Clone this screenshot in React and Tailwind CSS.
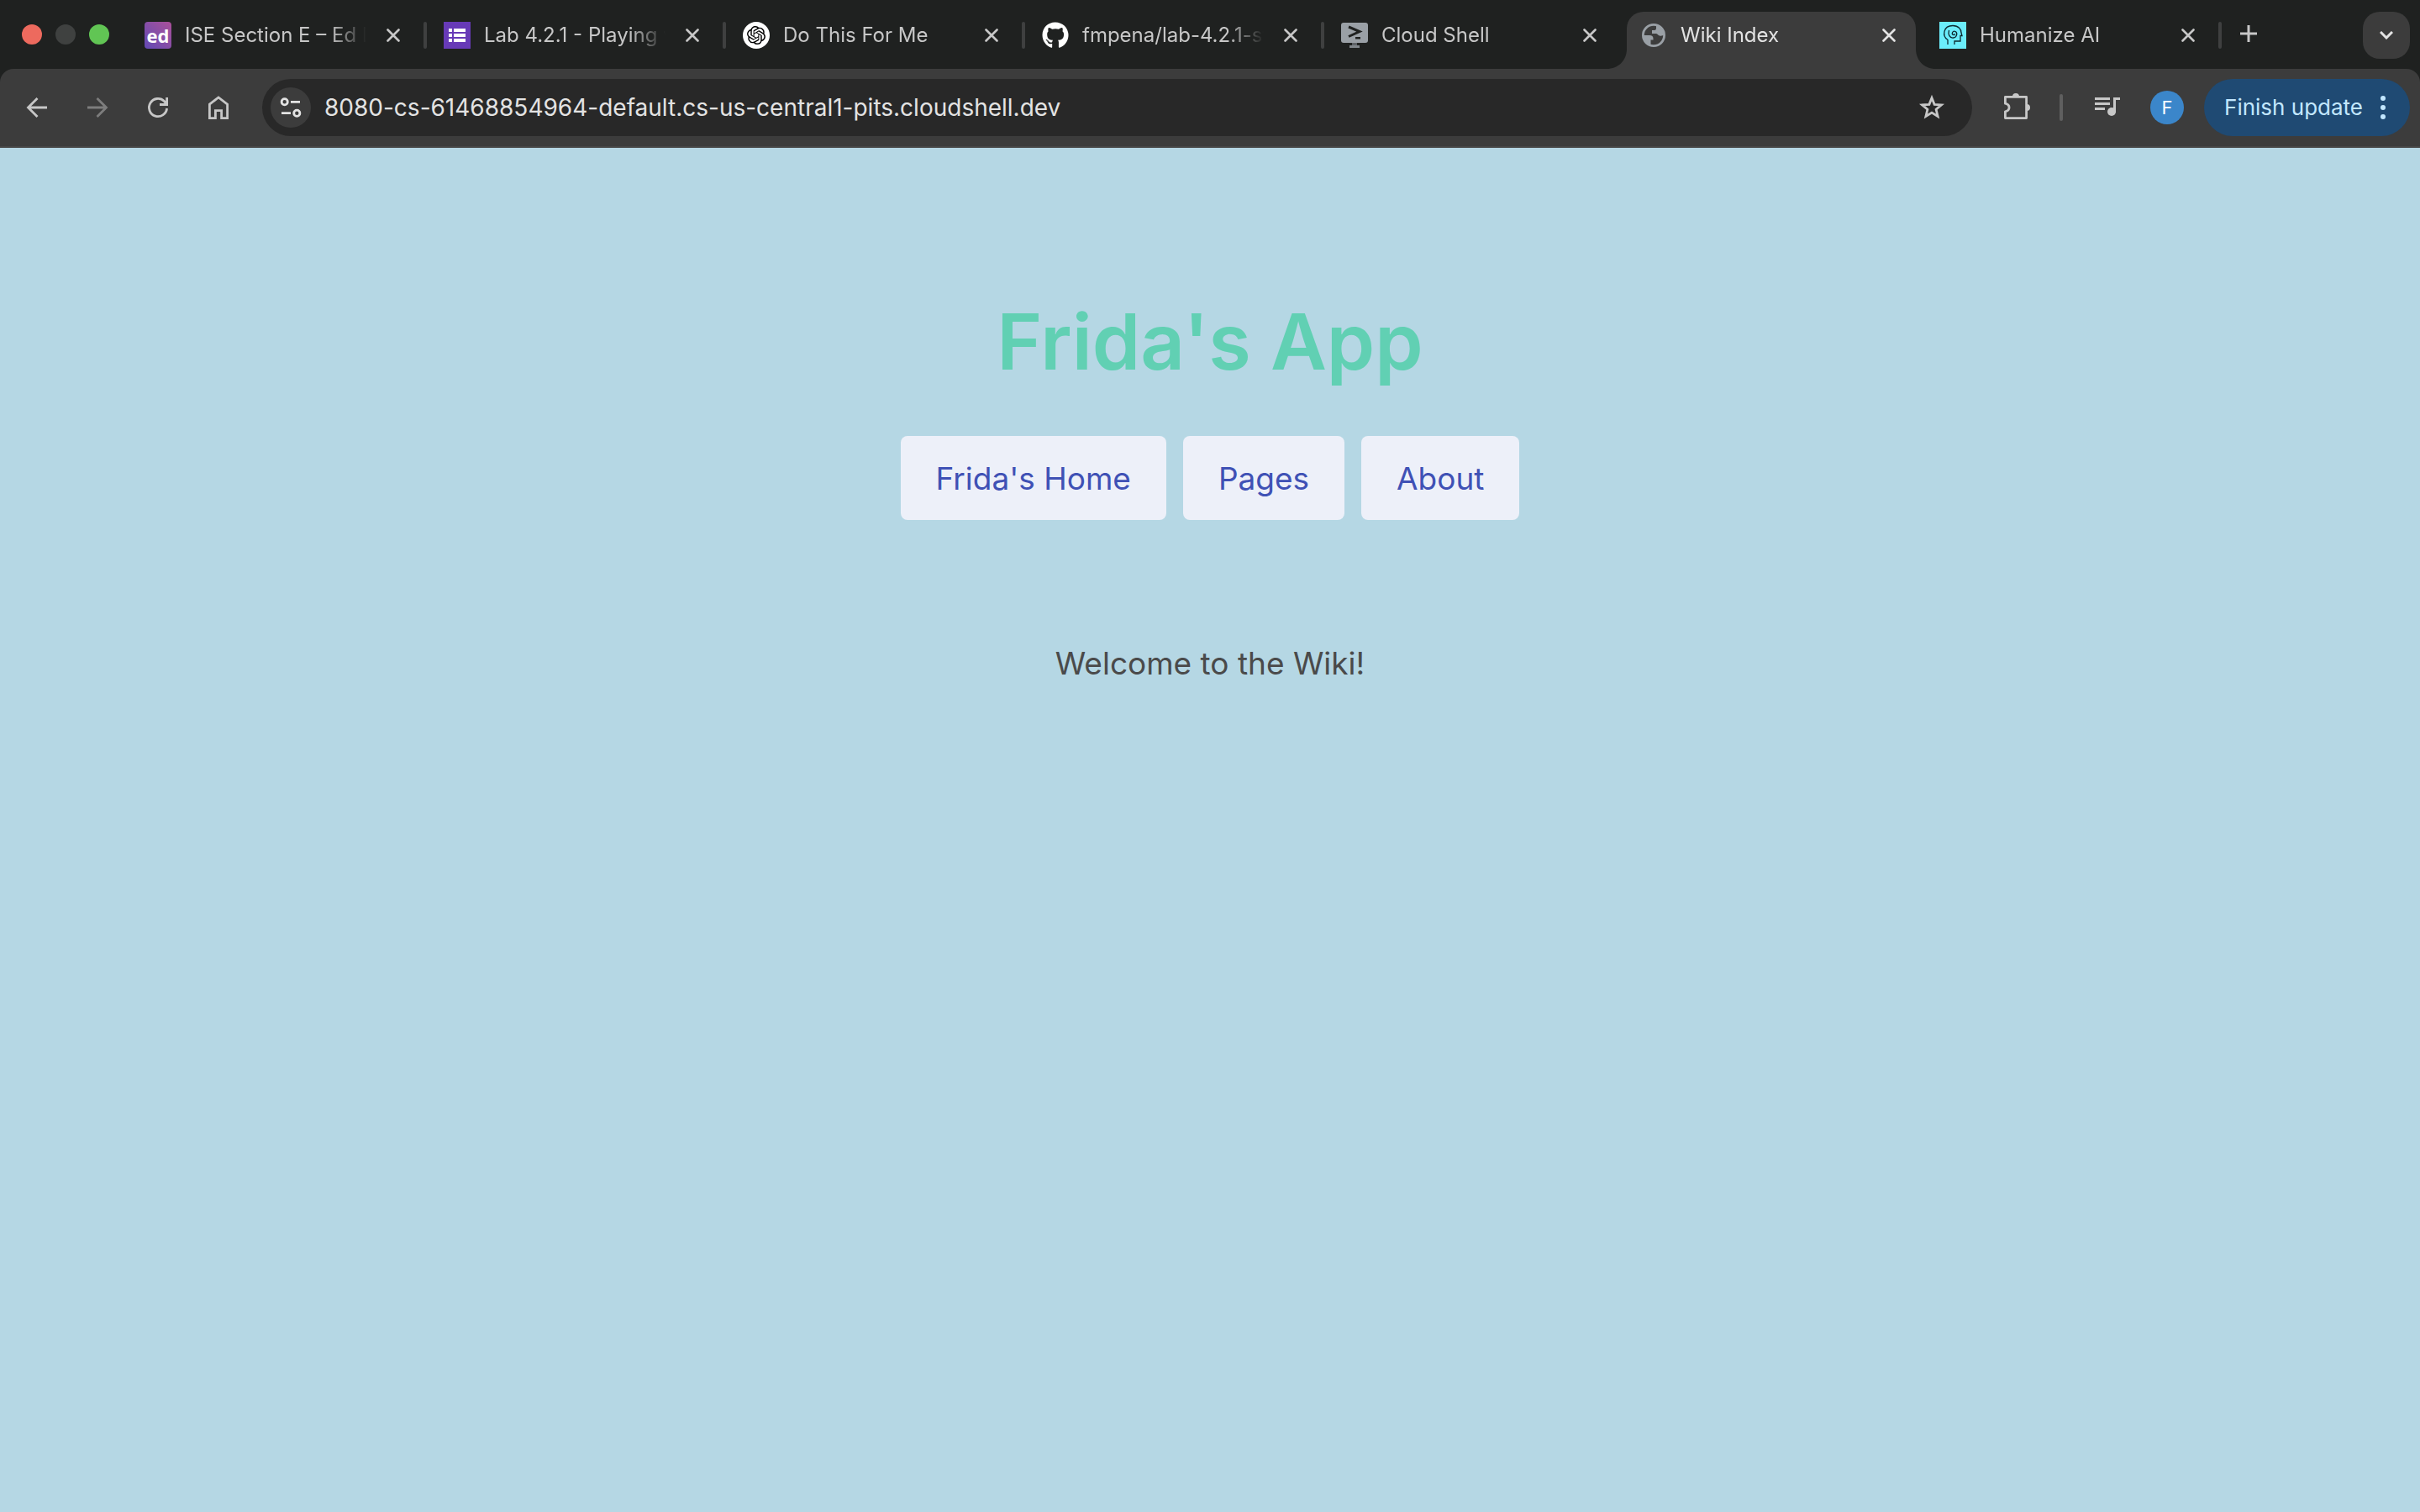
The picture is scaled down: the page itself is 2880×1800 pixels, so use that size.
import React from "react";
import { FaGithub } from "react-icons/fa";
import { SiOpenai } from "react-icons/si";

function EdIcon() {
  return (
    <span className="flex h-8 w-8 items-center justify-center rounded-sm bg-linear-to-tr from-[#6148b4] to-[#ab4f99] font-['Open_Sans',sans-serif] text-[22px] leading-6 font-bold text-white">
      ed
    </span>
  );
}

function FormsIcon() {
  return (
    <svg viewBox="0 0 32 32" className="h-8 w-8">
      <path fill="#673ab7" d="M0 0h32v32H0z" />
      <path fill="#fff" d="M6 8h4v4H6zM12 8h14v4H12zM6 14h4v4H6zM12 14h14v4H12zM6 20h4v4H6zM12 20h14v4H12z" />
    </svg>
  );
}

function GptIcon() {
  return (
    <span className="flex h-8 w-8 items-center justify-center rounded-full bg-white text-black">
      <SiOpenai size={22} />
    </span>
  );
}

function GithubIcon() {
  return <FaGithub size={32} className="text-white" />;
}

function ShellIcon() {
  return (
    <svg viewBox="0 0 32 32" className="h-8 w-8">
      <rect y="1" width="32" height="24" rx="3" fill="#9aa0a6" />
      <path fill="#5f6368" d="M13 25h6v3h-6z" />
      <path fill="#80868b" d="M10 28h12v3H10z" />
      <path fill="none" stroke="#1f2120" strokeWidth="3" d="M9 6l13 5.500L9 17.500" />
      <path fill="#1f2120" d="M17 18h6v2.500h-6z" />
    </svg>
  );
}

function GlobeIcon() {
  return (
    <svg viewBox="0 0 32 32" className="h-8 w-8">
      <circle cx="16" cy="16" r="12.600" fill="none" stroke="#9aa0a6" strokeWidth="2.800" />
      <path fill="#9aa0a6" d="M3 16h8c3 0 4.500 1.500 4.500 4v1.500h-3V28C7 27 3 22 3 16zM17 4c6 0 11 5 12 11-2 1.500-4 2-6 1.500-2-.500-2-2-4-2.500h-5v-4h3c1.500 0 2-1 2-2.500V4z" />
    </svg>
  );
}

function HeadIcon() {
  return (
    <svg viewBox="0 0 32 32" className="h-8 w-8" fill="none" stroke="#0c2a30" strokeWidth="1.300">
      <path fill="#6bedfb" stroke="none" d="M0 0h32v32H0z" />
      <path d="M10 27v-5.500C3 17 4.500 4.500 16 4.500c7 0 10 4.500 10 8.500l1 3.500h-2V23h-7v4" />
      <path d="M11.500 10c-1.500 5 1 9.500 5 9 4.500-.500 5.500-6 2.500-7.500-3-1.300-5 2.500-2.500 4 1.200.400 2-.300 1.800-1.300" />
    </svg>
  );
}

function Cross() {
  return (
    <svg viewBox="0 0 16 16" className="h-4 w-4" fill="none" stroke="currentColor" strokeWidth="2.600" strokeLinecap="round">
      <path d="M1.500 1.500l13 13M14.500 1.500l-13 13" />
    </svg>
  );
}

const tabs = [
  { title: "ISE Section E – Ed Discussion", Icon: EdIcon },
  { title: "Lab 4.2.1 - Playing with Flask", Icon: FormsIcon },
  { title: "Do This For Me", Icon: GptIcon },
  { title: "fmpena/lab-4.2.1-starter", Icon: GithubIcon },
  { title: "Cloud Shell", Icon: ShellIcon },
  { title: "Wiki Index", Icon: GlobeIcon, active: true },
  { title: "Humanize AI", Icon: HeadIcon },
];

function Flare({ className, d }) {
  return (
    <svg viewBox="0 0 24 24" className={className} fill="#3c3c3c">
      <path d={d} />
    </svg>
  );
}

function Tab({ title, Icon, active, divider }) {
  return (
    <div className="flex h-full w-[356px] min-w-0 items-end">
      <div
        className={
          active
            ? "relative ml-1 flex h-[68px] w-[344px] items-center rounded-t-[20px] bg-[#3c3c3c] pb-3 pl-4 text-[#e3e3e3]"
            : "flex h-[68px] w-[352px] min-w-0 items-center pb-3 pl-5 text-[#c7c7c7]"
        }
      >
        {active && <Flare className="absolute bottom-0 -left-6 h-6 w-6" d="M24 0v24H0C14 24 24 14 24 0z" />}
        <Icon />
        <button className="ml-4 w-[216px] overflow-hidden mask-r-from-80% mask-r-to-100% text-left text-[24px] leading-8 whitespace-nowrap">
          {title}
        </button>
        <button aria-label={"Close " + title} className="ml-6 flex h-8 w-4 items-center">
          <Cross />
        </button>
        {active && <Flare className="absolute -right-6 bottom-0 h-6 w-6" d="M0 0v24h24C10 24 0 14 0 0z" />}
      </div>
      {divider && <span className="mb-6 h-8 w-1 rounded-sm bg-[#3f4040]" />}
    </div>
  );
}

function Stroke({ children }) {
  return (
    <svg viewBox="0 0 32 32" className="h-8 w-8" fill="none" stroke="currentColor" strokeWidth="2.800">
      {children}
    </svg>
  );
}

function TabStrip() {
  return (
    <div className="flex h-[82px] bg-[#1f2120]">
      <div className="flex w-[152px] shrink-0 items-center gap-4 pl-[26px]">
        <button aria-label="Close window" className="h-6 w-6 rounded-full bg-[#ed6a5e]" />
        <button aria-label="Minimize window" className="h-6 w-6 rounded-full bg-[#3f4140]" />
        <button aria-label="Zoom window" className="h-6 w-6 rounded-full bg-[#61c554]" />
      </div>
      {tabs.map((tab, i) => (
        <Tab key={tab.title} {...tab} divider={!tab.active && !tabs[i + 1]?.active} />
      ))}
      <button aria-label="New tab" className="flex w-16 shrink-0 items-center justify-center pb-0.5 text-[#c7c7c7]">
        <svg viewBox="0 0 20 20" className="h-5 w-5" fill="currentColor">
          <path d="M8.500 0h3v8.500H20v3h-8.500V20h-3v-8.500H0v-3h8.500z" />
        </svg>
      </button>
      <button
        aria-label="Search tabs"
        className="mt-3.5 mr-3 ml-auto flex h-14 w-14 shrink-0 items-center justify-center rounded-[20px] bg-[#3c3c3c] text-[#e3e3e3]"
      >
        <svg viewBox="0 0 16 10" className="h-2.5 w-4" fill="none" stroke="currentColor" strokeWidth="3">
          <path d="M1 1l7 7 7-7" />
        </svg>
      </button>
    </div>
  );
}

function Toolbar() {
  return (
    <div className="bg-[#1f2120]">
      <div className="flex h-[94px] items-center rounded-t-2xl border-b-2 border-[#474747] bg-[#3c3c3c] pr-3 pl-7 text-[#c7c7c7]">
        <div className="flex gap-10">
          <button aria-label="Back">
            <Stroke>
              <path d="M28 16H6M16.500 5L5.500 16l11 11" />
            </Stroke>
          </button>
          <button aria-label="Forward" className="text-[#7d7d7d]">
            <Stroke>
              <path d="M4 16h22M15.500 5l11 11-11 11" />
            </Stroke>
          </button>
          <button aria-label="Reload">
            <Stroke>
              <path d="M26.600 17A10.600 10.600 0 1 1 23.500 8.500L26 11.500M26.600 4v8.500H18" />
            </Stroke>
          </button>
          <button aria-label="Home">
            <Stroke>
              <path d="M5.400 12.200L16 4l10.600 8.200v16.400h-7v-9h-7.200v9h-7z" />
            </Stroke>
          </button>
        </div>
        <div className="ml-9 flex h-[68px] flex-1 items-center rounded-full bg-[#282828] pr-8 pl-2.5">
          <button
            aria-label="View site information"
            className="flex h-12 w-12 items-center justify-center rounded-full bg-[#3c3c3c] text-[#e3e3e3]"
          >
            <Stroke>
              <circle cx="8.700" cy="9.300" r="3.600" />
              <circle cx="23.300" cy="22.700" r="3.600" />
              <path d="M16 9.300h11M5 22.700h11" />
            </Stroke>
          </button>
          <input
            aria-label="Address"
            readOnly
            value="8080-cs-61468854964-default.cs-us-central1-pits.cloudshell.dev"
            className="ml-4 min-w-0 flex-1 bg-transparent text-[28px] leading-9 text-[#e3e3e3] outline-none"
          />
          <button aria-label="Bookmark this tab">
            <Stroke>
              <path d="M16 4.500l3.100 7.800 8.400.600-6.400 5.400 2 8.200L16 22.100l-7.100 4.400 2-8.200-6.400-5.400 8.400-.600z" />
            </Stroke>
          </button>
        </div>
        <button aria-label="Extensions" className="ml-9">
          <svg viewBox="0 0 36 36" className="h-9 w-9" fill="none" stroke="currentColor" strokeWidth="2.800">
            <path strokeLinejoin="round" d="M3.400 5.400h25.200v25.200H3.400v-7.800c6.200-1.500 6.200-8.100 0-9.600z" />
            <path fill="currentColor" stroke="none" d="M12 5a4 4 0 0 1 8 0zM29 14a4 4 0 0 1 0 8z" />
          </svg>
        </button>
        <span className="ml-8 h-8 w-1 rounded-sm bg-[#5f5f5f]" />
        <button aria-label="Media controls" className="ml-9">
          <svg viewBox="0 0 36 32" className="h-8 w-9" fill="currentColor">
            <path d="M2 4h18v3H2zM2 10h18v3H2zM2 16h12v3H2zM24 4h8v3h-5v15h-3z" />
            <circle cx="22" cy="21" r="5" />
          </svg>
        </button>
        <button className="ml-8 flex h-10 w-10 items-center justify-center rounded-full bg-[#3b86ca] text-[22px] leading-6 text-white">
          F
        </button>
        <button className="ml-6 flex h-[68px] items-center rounded-full bg-[#1f4a73] pr-7 pl-6 text-[26px] leading-8 text-[#c2e7ff]">
          Finish update
          <svg viewBox="0 0 8 28" className="ml-5 h-7 w-2" fill="currentColor">
            <circle cx="4" cy="3" r="3" />
            <circle cx="4" cy="14" r="3" />
            <circle cx="4" cy="25" r="3" />
          </svg>
        </button>
      </div>
    </div>
  );
}

const links = ["Frida's Home", "Pages", "About"];

export default function App() {
  return (
    <div className="flex min-h-screen flex-col bg-[#b5d7e4] font-[Inter,sans-serif]">
      <header>
        <TabStrip />
        <Toolbar />
      </header>
      <main className="flex flex-1 flex-col items-center pt-[171px]">
        <h1 className="text-[92px] leading-[120px] font-semibold text-[#61d0b3]">Frida's App</h1>
        <nav className="mt-[52px] flex gap-5">
          {links.map((label) => (
            <a key={label} href="#" className="flex h-[100px] items-center rounded-lg bg-[#edf0f9] px-[42px] pt-0.5 text-[37px] text-[#3f51b5]">
              {label}
            </a>
          ))}
        </nav>
        <p className="mt-[141px] text-[37px] leading-[60px] text-[#4a4a4a]">Welcome to the Wiki!</p>
      </main>
    </div>
  );
}
